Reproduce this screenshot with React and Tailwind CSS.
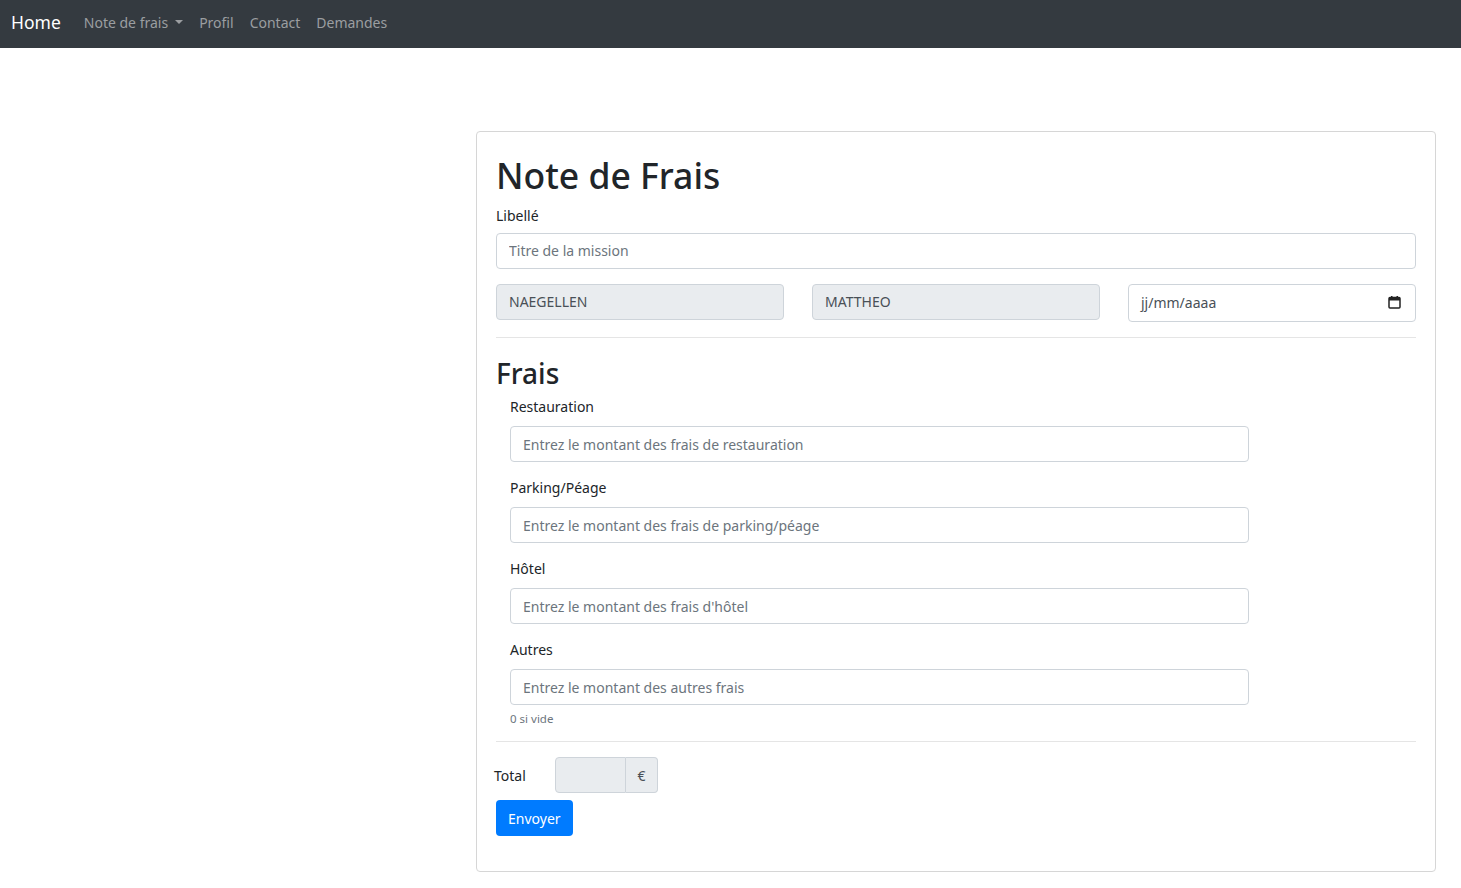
import React from "react";

const font = { fontFamily: '"Noto Sans", "Liberation Sans", sans-serif' };

const fraisFields = [
  { label: "Restauration", placeholder: "Entrez le montant des frais de restauration" },
  { label: "Parking/Péage", placeholder: "Entrez le montant des frais de parking/péage" },
  { label: "Hôtel", placeholder: "Entrez le montant des frais d'hôtel" },
  { label: "Autres", placeholder: "Entrez le montant des autres frais" },
];

const inputCls =
  "block w-full h-[36px] px-[12px] text-[14px] text-[#495057] bg-white border border-[#ced4da] rounded-[4px] outline-none placeholder:text-[#6c757d]";

function CalendarIcon() {
  return (
    <svg width="13" height="13" viewBox="0 0 13 13" className="text-[#222]">
      <rect x="1" y="1.5" width="11" height="10.5" rx="1" fill="none" stroke="currentColor" strokeWidth="1.5" />
      <rect x="1" y="1.5" width="11" height="3" fill="currentColor" />
      <rect x="3" y="0" width="1.5" height="2" fill="currentColor" />
      <rect x="8.5" y="0" width="1.5" height="2" fill="currentColor" />
    </svg>
  );
}

export default function App() {
  return (
    <div className="min-h-screen bg-white text-[#212529]" style={font}>
      {/* ===== NAVBAR ===== */}
      <nav className="h-[48px] bg-[#343a40] flex items-center px-[11px]">
        <span className="text-[17.5px] text-white mr-[23px] -mt-[4px]">Home</span>
        <div className="flex items-center gap-[16px] text-[14px] text-[#9b9ea1] -mt-[4px]">
          <span className="flex items-center">
            Note de frais
            <span className="ml-[7px] w-0 h-0 border-l-[4px] border-r-[4px] border-t-[4px] border-l-transparent border-r-transparent border-t-[#9b9ea1]" />
          </span>
          <span>Profil</span>
          <span>Contact</span>
          <span>Demandes</span>
        </div>
      </nav>

      {/* ===== CARD ===== */}
      <div className="pt-[83px] pl-[476px] pr-[25px]">
        <div className="border border-[#d6d6d6] rounded-[4px] px-[19px] pt-[22px] pb-[35px]">
          <h1 className="text-[35.5px] font-medium leading-[1.2] mb-[8px]">Note de Frais</h1>

          <label className="block text-[14px] leading-[22px] mb-[6px]">Libellé</label>
          <input className={inputCls} placeholder="Titre de la mission" />

          <div className="grid grid-cols-3 gap-[28px] mt-[15px]">
            <div className="h-[36px] px-[12px] flex items-center text-[14px] text-[#495057] bg-[#e9ecef] border border-[#ced4da] rounded-[4px]">
              NAEGELLEN
            </div>
            <div className="h-[36px] px-[12px] flex items-center text-[14px] text-[#495057] bg-[#e9ecef] border border-[#ced4da] rounded-[4px]">
              MATTHEO
            </div>
            <div className="h-[38px] pl-[12px] pr-[14px] flex items-center justify-between text-[14px] text-[#495057] bg-white border border-[#ced4da] rounded-[4px]">
              <span>jj/mm/aaaa</span>
              <CalendarIcon />
            </div>
          </div>

          <hr className="border-t border-[#e5e5e5] mt-[15px] mb-[19px]" />

          <h2 className="text-[28px] font-medium leading-[1.2] mb-[6px]">Frais</h2>

          <div className="pl-[14px] w-[753px]">
            {fraisFields.map((f, i) => (
              <div key={f.label} className={i === 0 ? "" : "mt-[15px]"}>
                <label className="block text-[14px] leading-[22px] mb-[8px]">{f.label}</label>
                <input className={inputCls} placeholder={f.placeholder} />
              </div>
            ))}
            <p className="text-[11.5px] text-[#6c757d] mt-[5px]">0 si vide</p>
          </div>

          <hr className="border-t border-[#e5e5e5] mt-[14px] mb-[15px]" />

          <div className="flex items-center -ml-[2px]">
            <span className="text-[14px] w-[61px]">Total</span>
            <div className="flex h-[36px]">
              <div className="w-[71px] bg-[#e9ecef] border border-[#ced4da] rounded-l-[4px]" />
              <div className="w-[32px] flex items-center justify-center text-[14px] text-[#495057] bg-[#e9ecef] border border-l-0 border-[#ced4da] rounded-r-[4px]">
                €
              </div>
            </div>
          </div>

          <button className="mt-[7px] h-[36px] px-[12px] text-[14px] text-white bg-[#007bff] rounded-[4px]">
            Envoyer
          </button>
        </div>
      </div>
    </div>
  );
}
